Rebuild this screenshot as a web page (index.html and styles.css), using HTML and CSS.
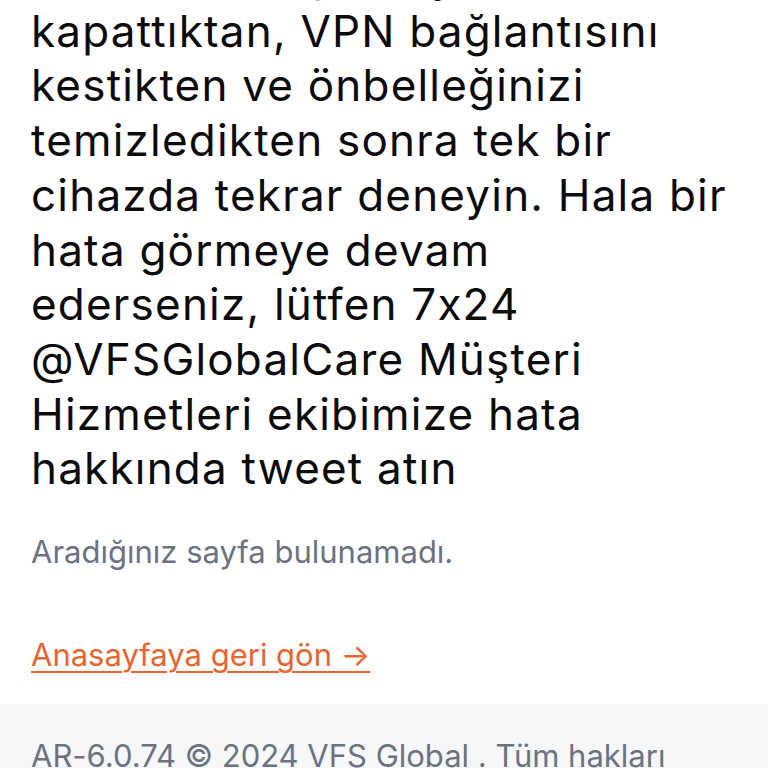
FILE: index.html
```html
<!DOCTYPE html>
<html lang="tr">
<head>
    <meta charset="UTF-8">
    <meta name="viewport" content="width=device-width, initial-scale=1.0">
    <title>Sayfa bulunamadı</title>
    <link rel="stylesheet" href="styles.css">
</head>
<body>
    <main class="error-page">
        <h1 class="error-title">Lütfen tüm açık sayfaları kapattıktan, VPN bağlantısını kestikten ve önbelleğinizi temizledikten sonra tek bir cihazda tekrar deneyin. Hala bir hata görmeye devam ederseniz, lütfen 7x24 @VFSGlobalCare Müşteri Hizmetleri ekibimize hata hakkında tweet atın</h1>
        <p class="error-text">Aradığınız sayfa bulunamadı.</p>
        <a class="home-link" href="#">Anasayfaya geri gön →</a>
    </main>

    <footer class="footer">
        <p>AR-6.0.74 © 2024 VFS Global . Tüm hakları saklıdır.</p>
    </footer>
</body>
</html>
```

FILE: styles.css
```css
body {
    font-family: Inter, "Noto Sans", sans-serif;
    font-feature-settings: "calt" 0;
    margin: 0;
    padding: 0;
    background-color: #fff;
    color: #0b0b0c;
}

.error-page {
    padding: 0 40px 0 31px;
}

.error-title {
    margin: -51px 0 0;
    font-size: 44px;
    font-weight: 400;
    line-height: 54.7px;
    letter-spacing: 1.2px;
    color: #0b0b0c;
}

.error-text {
    margin: 36px 0 0;
    font-size: 31px;
    line-height: 40px;
    color: #6b7280;
}

.home-link {
    display: inline-block;
    margin-top: 63px;
    font-size: 31px;
    line-height: 40px;
    color: #e7652f;
    text-decoration: underline;
    text-decoration-thickness: 2px;
    text-underline-offset: 5px;
}

.footer {
    margin-top: 29px;
    background-color: #f5f7f9;
    padding: 32px 31px;
}

.footer p {
    margin: 0;
    font-size: 31px;
    line-height: 40px;
    color: #6b7280;
}
```
